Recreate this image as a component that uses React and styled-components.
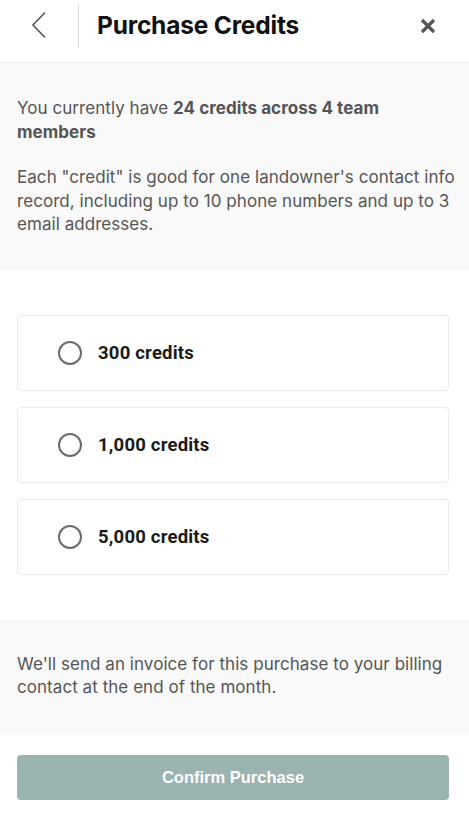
import React, { useState } from "react";
import styled, { createGlobalStyle } from "styled-components";

const GlobalStyle = createGlobalStyle`
  html, body {
    margin: 0;
    padding: 0;
    background: #ffffff;
  }
  body {
    font-family: Inter, "Liberation Sans", Arial, sans-serif;
    -webkit-font-smoothing: antialiased;
  }
`;

const Page = styled.div`
  width: 469px;
  min-height: 815px;
  display: flex;
  flex-direction: column;
  background: #ffffff;
`;

const Header = styled.header`
  height: 63px;
  display: flex;
  align-items: center;
  border-bottom: 1px solid #ececec;
  box-sizing: border-box;
`;

const BackButton = styled.button`
  width: 78px;
  height: 62px;
  display: flex;
  align-items: center;
  justify-content: center;
  background: none;
  border: none;
  padding: 0 0 12px 0;
  cursor: pointer;
`;

const Divider = styled.div`
  width: 1px;
  align-self: flex-start;
  margin-top: 4px;
  height: 44px;
  background: #dcdcdc;
`;

const Title = styled.h1`
  flex: 1;
  margin: 0 0 12px 18px;
  font-size: 24.5px;
  font-weight: 700;
  color: #111;
  letter-spacing: -0.2px;
`;

const CloseButton = styled.button`
  width: 50px;
  height: 62px;
  margin-right: 16px;
  display: flex;
  align-items: center;
  justify-content: center;
  background: none;
  border: none;
  padding: 0 0 10px 0;
  cursor: pointer;
`;

const GreySection = styled.section`
  background: #f9f9f9;
  padding: ${(p) => p.$pad};
  display: flex;
  flex-direction: column;
  gap: 22px;
`;

const Text = styled.p`
  margin: 0;
  max-width: ${(p) => p.$max || 432}px;
  font-size: 17px;
  line-height: 23.5px;
  color: #555;
  letter-spacing: 0.05px;

  strong {
    font-weight: 700;
  }
`;

const Options = styled.div`
  display: flex;
  flex-direction: column;
  gap: 16px;
  padding: 45px 20px 45px 17px;
`;

const OptionCard = styled.label`
  height: 76px;
  box-sizing: border-box;
  display: flex;
  align-items: center;
  gap: 16px;
  padding-left: 40px;
  border: 1px solid #ebebeb;
  border-radius: 4px;
  background: #fff;
  cursor: pointer;
`;

const Radio = styled.span`
  width: 20px;
  height: 20px;
  border-radius: 50%;
  border: 2px solid ${(p) => (p.$checked ? "#5b8a86" : "#6b6b6b")};
  display: flex;
  align-items: center;
  justify-content: center;

  &::after {
    content: "";
    width: 10px;
    height: 10px;
    border-radius: 50%;
    background: ${(p) => (p.$checked ? "#5b8a86" : "transparent")};
  }
`;

const OptionLabel = styled.span`
  font-family: Roboto, "Liberation Sans", sans-serif;
  font-size: 18.5px;
  font-weight: 700;
  color: #1a1a1a;
  letter-spacing: 0.2px;
`;

const Footer = styled.div`
  padding: 20px 20px 15px 17px;
`;

const ConfirmButton = styled.button`
  width: 100%;
  height: 45px;
  border: none;
  border-radius: 4px;
  background: #9bb3b1;
  color: #fff;
  font-family: "Liberation Sans", Arial, sans-serif;
  font-size: 16.5px;
  font-weight: 700;
  cursor: pointer;
`;

const options = ["300 credits", "1,000 credits", "5,000 credits"];

export default function App() {
  const [selected, setSelected] = useState(null);

  return (
    <>
      <GlobalStyle />
      <Page>
        <Header>
          <BackButton aria-label="Back">
            <svg width="18" height="28" viewBox="0 0 18 28" fill="none">
              <path d="M15 1.5 L3 14 L15 26.5" stroke="#555" strokeWidth="1.6" />
            </svg>
          </BackButton>
          <Divider />
          <Title>Purchase Credits</Title>
          <CloseButton aria-label="Close">
            <svg width="16" height="16" viewBox="0 0 16 16" fill="none">
              <path d="M2 2 L14 14 M14 2 L2 14" stroke="#555" strokeWidth="3.2" />
            </svg>
          </CloseButton>
        </Header>

        <GreySection $pad="34px 0 33px 17px">
          <Text $max={420}>
            You currently have <strong>24 credits across 4 team members</strong>
          </Text>
          <Text $max={446}>
            Each "credit" is good for one landowner's contact info record,
            including up to 10 phone numbers and up to 3 email addresses.
          </Text>
        </GreySection>

        <Options>
          {options.map((o, i) => (
            <OptionCard key={o} onClick={() => setSelected(i)}>
              <Radio $checked={selected === i} />
              <OptionLabel>{o}</OptionLabel>
            </OptionCard>
          ))}
        </Options>

        <GreySection $pad="33px 0 35px 17px">
          <Text>
            We'll send an invoice for this purchase to your billing contact at
            the end of the month.
          </Text>
        </GreySection>

        <Footer>
          <ConfirmButton>Confirm Purchase</ConfirmButton>
        </Footer>
      </Page>
    </>
  );
}
